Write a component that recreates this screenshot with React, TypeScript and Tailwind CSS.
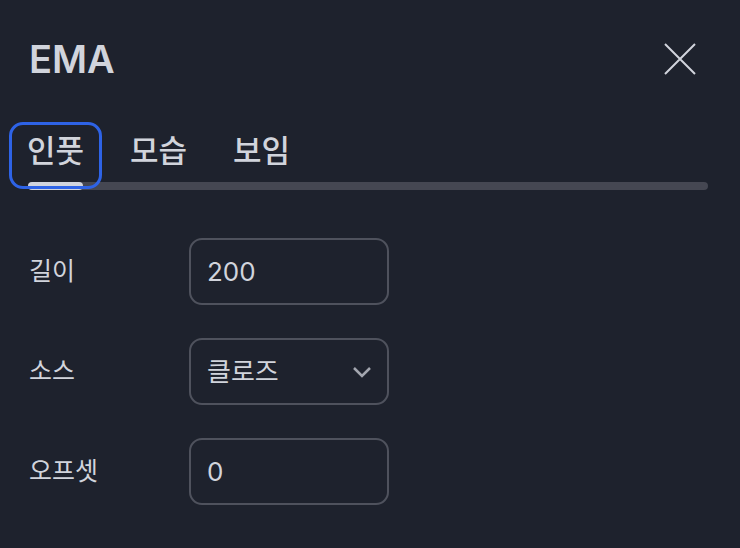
const tabs = ['인풋', '모습', '보임'];

const fields = [
  { label: '길이', value: '200', select: false },
  { label: '소스', value: '클로즈', select: true },
  { label: '오프셋', value: '0', select: false },
];

export default function App() {
  return (
    <div
      className="w-[740px] h-[548px] bg-[#1e222d] text-[#d1d4dc] overflow-hidden"
      style={{ fontFamily: 'Inter, "Noto Sans CJK KR", sans-serif' }}
    >
      {/* Header */}
      <div className="flex items-center justify-between pt-[36px] pl-[29px] pr-[44px]">
        <h1 className="text-[38px] leading-[46px] font-semibold">EMA</h1>
        <svg width="32" height="32" viewBox="0 0 32 32" className="text-[#d1d4dc]">
          <path d="M1 1L31 31M31 1L1 31" stroke="currentColor" strokeWidth="2" fill="none" />
        </svg>
      </div>

      {/* Tabs */}
      <div className="mt-[40px] pl-[9px] pr-[32px]">
        <div className="flex gap-[10px]">
          {tabs.map((t, i) => (
            <button
              key={t}
              className={`relative z-10 rounded-[14px] border-[3px] px-[15px] pt-[6px] pb-[15px] text-[31px] leading-[40px] font-medium ${
                i === 0 ? 'border-[#2e63e6]' : 'border-transparent'
              }`}
            >
              {t}
            </button>
          ))}
        </div>
        <div className="-mt-[7px] ml-[19px] h-[8px] rounded-full bg-[#454752]">
          <div className="w-[55px] h-[8px] rounded-full bg-[#d1d4dc]" />
        </div>
      </div>

      {/* Form */}
      <div className="mt-[48px] pl-[29px] flex flex-col gap-[33px]">
        {fields.map((f) => (
          <div key={f.label} className="flex items-center">
            <div className="w-[160px] text-[25px]">{f.label}</div>
            <div className="w-[200px] h-[67px] rounded-[13px] border-2 border-[#4f525d] flex items-center justify-between pl-[16px] pr-[15px]">
              <span className="text-[26px]">{f.value}</span>
              {f.select && (
                <svg width="20" height="12" viewBox="0 0 20 12" className="text-[#a3a6af]">
                  <path d="M2 2L10 10L18 2" stroke="currentColor" strokeWidth="2.5" fill="none" />
                </svg>
              )}
            </div>
          </div>
        ))}
      </div>
    </div>
  );
}
